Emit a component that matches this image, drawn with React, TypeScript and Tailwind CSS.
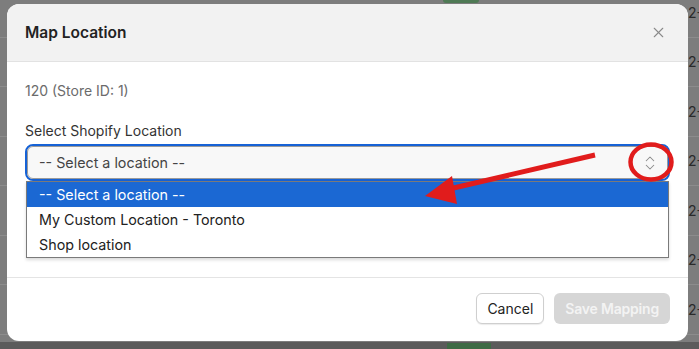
import React from 'react';
import { X, ChevronsUpDown } from 'lucide-react';

const rows = [0, 1, 2, 3, 4, 5, 6, 7];

const options = [
    { label: '-- Select a location --', active: true },
    { label: 'My Custom Location - Toronto', active: false },
    { label: 'Shop location', active: false },
];

const App: React.FC = () => {
    return (
        <div
            className="relative w-[699px] h-[349px] overflow-hidden bg-[#7d7d7d]"
            style={{ fontFamily: 'Inter, "Liberation Sans", sans-serif' }}
        >
            {/* page behind the overlay */}
            <div className="flex flex-col mt-[-12px]">
                {rows.map((r) => (
                    <div
                        key={r}
                        className="h-[49.5px] border-b border-[#8c8c8c] flex items-center justify-end text-[14px] text-[#2a2a2a]"
                    >
                        <span className="w-[11px] overflow-hidden whitespace-nowrap">2-</span>
                    </div>
                ))}
            </div>
            <div className="absolute left-[443px] top-0 w-[36px] h-[3px] rounded-b-full bg-[#4f7a55]" />
            <div className="absolute left-0 right-0 top-[342px] h-[7px] bg-[#5b5b5b]" />
            <div className="absolute left-[447px] top-[343px] w-[44px] h-[6px] bg-[#3e6b45]" />

            {/* modal */}
            <div className="absolute left-[7px] top-[4px] w-[681px] h-[337px] rounded-[12px] bg-white overflow-hidden flex flex-col">
                <div className="h-[58px] shrink-0 bg-[#f2f2f2] border-b border-[#e2e2e2] flex items-center justify-between pl-[18px] pr-[21px]">
                    <h2 className="text-[15.5px] font-semibold text-[#222]">Map Location</h2>
                    <X size={17} strokeWidth={1.5} className="text-[#8a8a8a]" />
                </div>

                <div className="relative h-[216px] shrink-0 px-[18px] pt-[19px] border-b border-[#e4e4e4]">
                    <p className="text-[14px] leading-[20px] text-[#6b6b6b]">120 (Store ID: 1)</p>
                    <label className="block mt-[20px] text-[14px] leading-[20px] text-[#333]">Select Shopify Location</label>
                    <div className="relative mt-[3px] h-[37px] rounded-[8px] border-2 border-[#1662d6]">
                        <div className="h-full rounded-[6px] border border-[#9a9a9a] bg-[#f8f8f8] flex items-center justify-between pl-[11px] pr-[8px]">
                            <span className="text-[14.3px] text-[#444]">-- Select a location --</span>
                            <ChevronsUpDown size={18} strokeWidth={1.4} className="text-[#8a8a8a]" />
                        </div>
                        <div className="absolute left-[-1px] right-[-1px] top-[35px] border border-[#7a7a7a] bg-white shadow-[0_2px_3px_rgba(0,0,0,0.15)] z-10">
                            {options.map((o) => (
                                <div
                                    key={o.label}
                                    className={`h-[25px] flex items-center pl-[12px] text-[14.3px] ${
                                        o.active ? 'bg-[#1b68d3] text-white' : 'text-[#222]'
                                    }`}
                                >
                                    {o.label}
                                </div>
                            ))}
                        </div>
                    </div>
                </div>

                <div className="flex-1 flex items-center justify-end gap-[10px] pr-[18px] pb-[2px]">
                    <button className="h-[31px] px-[10px] rounded-[6px] border border-[#cfcfcf] bg-white text-[14px] text-[#222] shadow-[0_1px_1px_rgba(0,0,0,0.08)]">
                        Cancel
                    </button>
                    <button className="h-[31px] px-[11px] rounded-[6px] bg-[#d6d6d6] text-[14px] font-semibold text-[#f3f3f3] tracking-[-0.2px]">
                        Save Mapping
                    </button>
                </div>
            </div>

            {/* annotation */}
            <svg className="absolute inset-0 z-20 pointer-events-none" width="699" height="349" viewBox="0 0 699 349">
                <ellipse cx="651" cy="162" rx="20.5" ry="17.5" fill="none" stroke="#e11c1c" strokeWidth="4.5" />
                <line x1="595" y1="155" x2="445" y2="190" stroke="#e11c1c" strokeWidth="5" />
                <polygon points="425,196 452,176 457,204" fill="#e11c1c" />
            </svg>
        </div>
    );
};

export default App;
